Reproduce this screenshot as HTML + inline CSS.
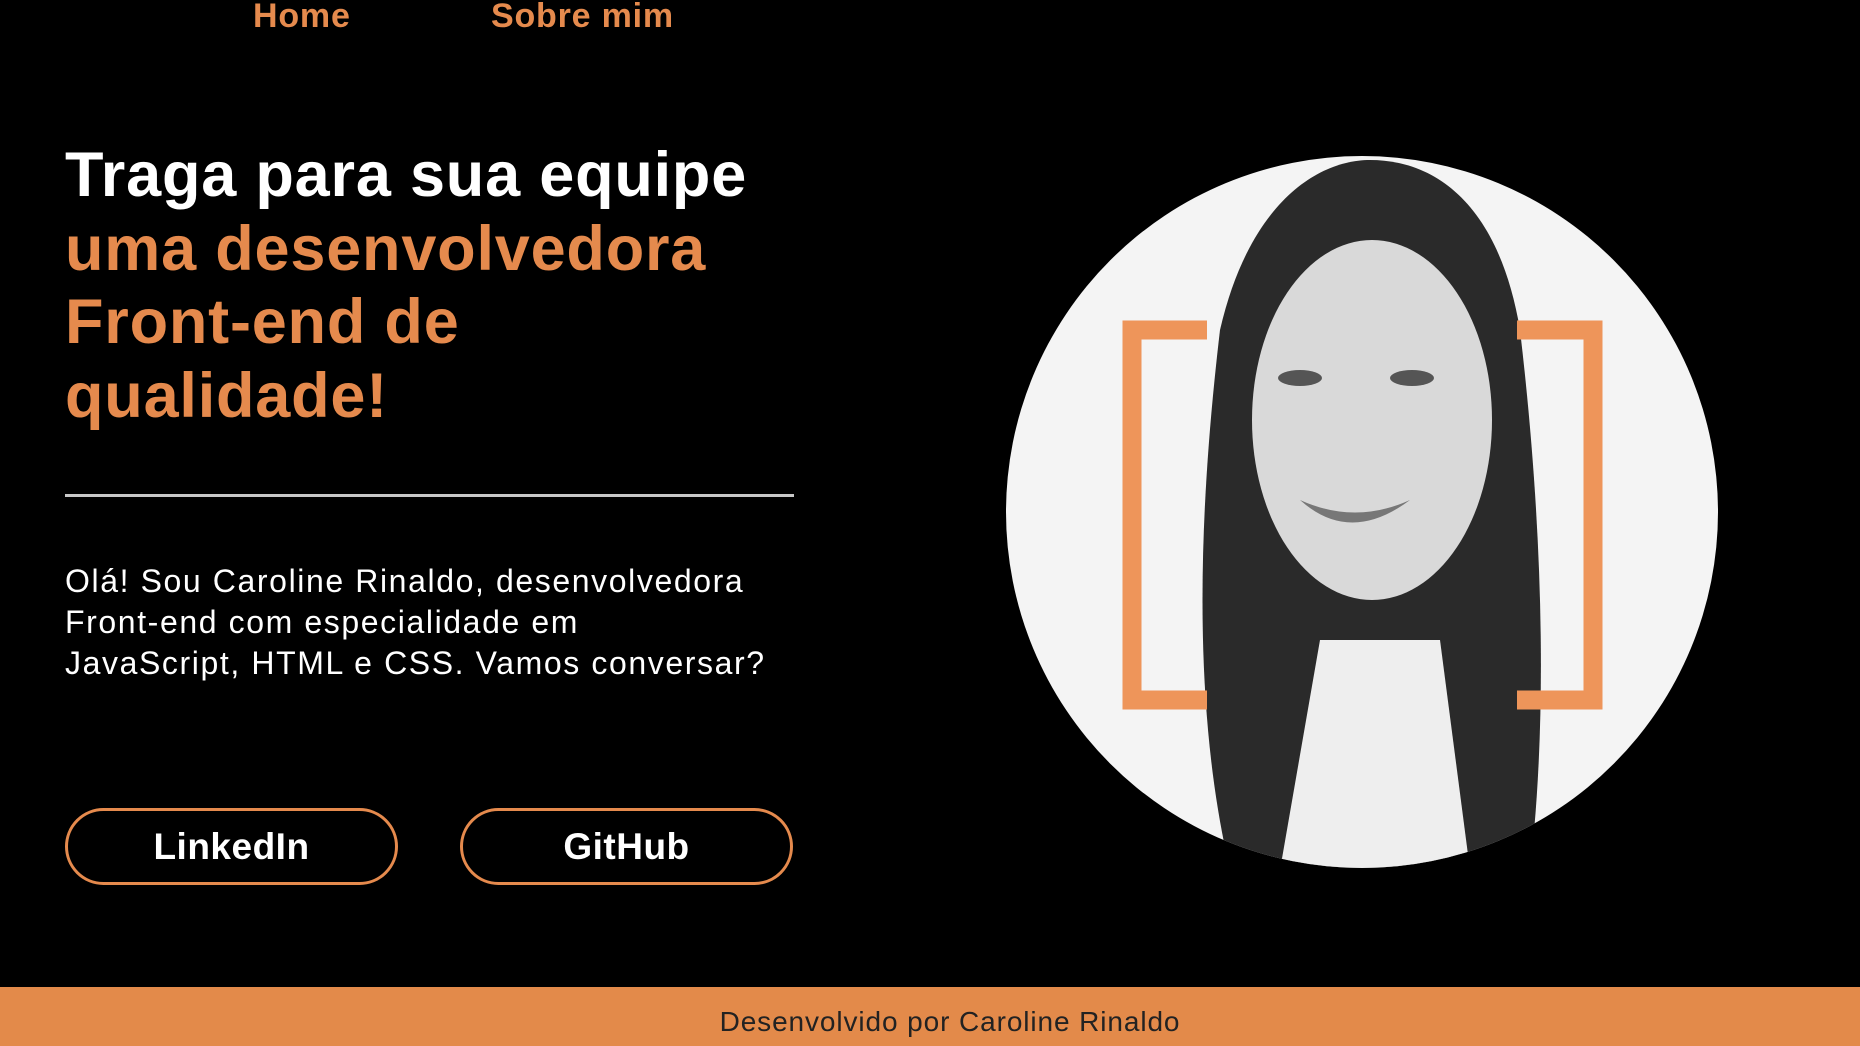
<!DOCTYPE html>
<html><head><meta charset="utf-8"><style>
*{margin:0;padding:0;box-sizing:border-box}
html,body{width:1860px;height:1046px;overflow:hidden}
body{background:#000;position:relative;font-family:"Liberation Sans",sans-serif;color:#fff}
.nav{position:absolute;top:-3px;font-size:34px;font-weight:bold;color:#e58a4d;letter-spacing:0.8px}
h1{position:absolute;left:65px;top:139px;font-size:63px;line-height:73.5px;font-weight:bold;letter-spacing:0.8px}
h1 span{color:#e58a4d}
.hr{position:absolute;left:65px;top:494px;width:729px;height:3px;background:#c8c8c8}
p{position:absolute;left:65px;top:561px;font-size:32px;line-height:41px;letter-spacing:1.6px}
.btn{position:absolute;top:808px;width:333px;height:77px;border:3px solid #e58a4d;border-radius:40px;font-size:37px;font-weight:bold;text-align:center;line-height:71px;letter-spacing:0.5px}
footer{position:absolute;left:0;top:987px;width:1860px;height:59px;background:#e38a4a;color:#222;text-align:center;font-size:28px;line-height:70px;letter-spacing:0.9px;padding-left:40px;overflow:hidden}
</style></head><body>
<div class="nav" style="left:253px">Home</div>
<div class="nav" style="left:491px">Sobre mim</div>
<h1>Traga para sua equipe<br><span>uma desenvolvedora<br>Front-end de<br>qualidade!</span></h1>
<div class="hr"></div>
<p>Olá! Sou Caroline Rinaldo, desenvolvedora<br>Front-end com especialidade em<br>JavaScript, HTML e CSS. Vamos conversar?</p>
<div class="btn" style="left:65px">LinkedIn</div>
<div class="btn" style="left:460px">GitHub</div>
<svg style="position:absolute;left:0;top:0" width="1860" height="1046">
<defs><clipPath id="c"><circle cx="1362" cy="512" r="356"/></clipPath></defs>
<circle cx="1362" cy="512" r="356" fill="#f4f4f4"/>
<g clip-path="url(#c)">
<path d="M1230 870 C1190 700 1200 500 1220 330 C1250 200 1320 160 1370 160 C1440 160 1500 210 1520 330 C1540 500 1550 700 1530 870 Z" fill="#2a2a2a"/>
<ellipse cx="1372" cy="420" rx="120" ry="180" fill="#d9d9d9"/>
<path d="M1280 870 L1320 640 L1440 640 L1470 870 Z" fill="#eee"/>
<ellipse cx="1300" cy="378" rx="22" ry="8" fill="#555"/>
<ellipse cx="1412" cy="378" rx="22" ry="8" fill="#555"/>
<path d="M1300 500 Q1350 545 1410 500 Q1355 525 1300 500Z" fill="#777"/>
</g>
<path d="M1207 330 H1132 V700 H1207" fill="none" stroke="#ee955a" stroke-width="19"/>
<path d="M1517 330 H1593 V700 H1517" fill="none" stroke="#ee955a" stroke-width="19"/>
</svg>
<footer>Desenvolvido por Caroline Rinaldo</footer>
</body></html>
